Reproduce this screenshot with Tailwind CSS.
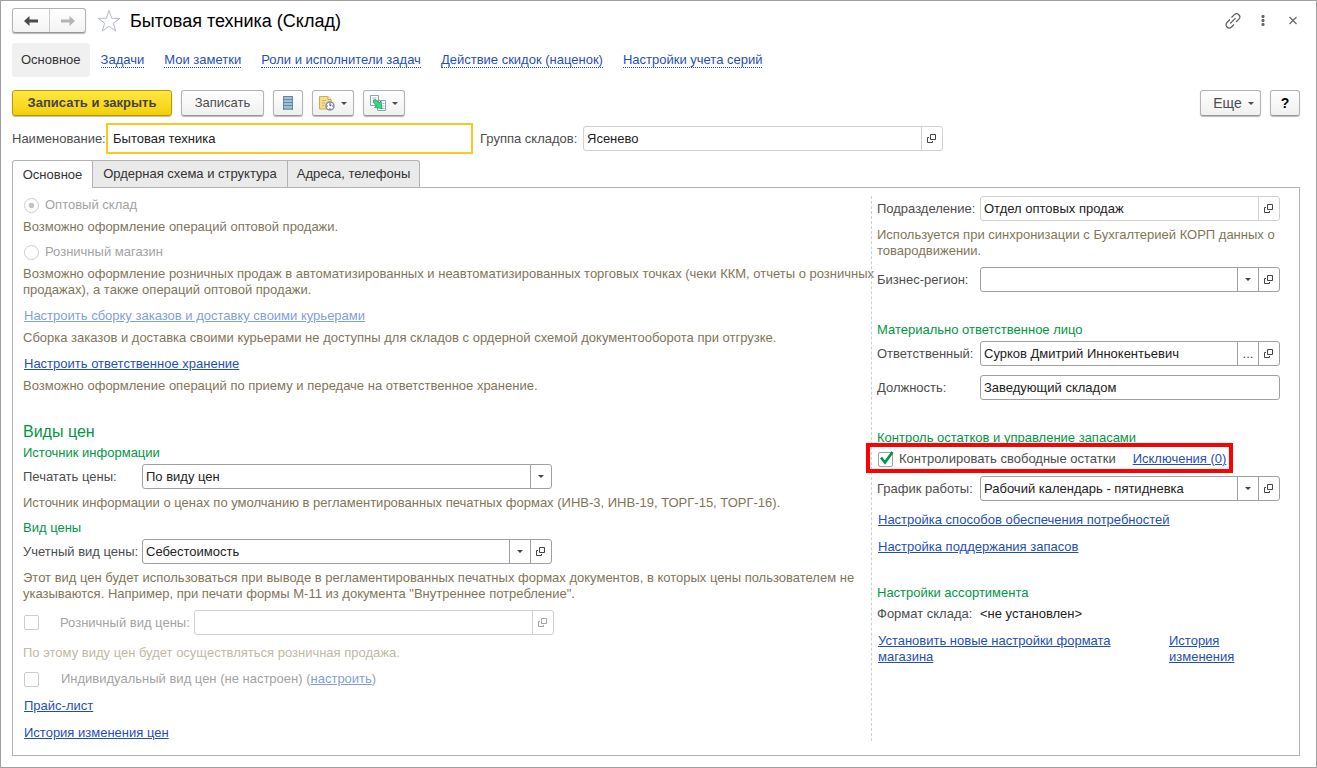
<!DOCTYPE html>
<html lang="ru">
<head>
<meta charset="utf-8">
<title>Бытовая техника (Склад)</title>
<script src="https://cdn.jsdelivr.net/npm/@tailwindcss/browser@4"></script>
</head>
<body class="bg-white font-['Liberation_Sans',Arial,sans-serif] text-[13px] leading-4 text-[#4d4d4d]">
<svg class="hidden" aria-hidden="true">
  <symbol id="open" viewBox="0 0 10 10"><path d="M3.500 .5h5v5h-5z M2 3.500H.5v5h5V7" fill="none" stroke="currentColor"/></symbol>
  <symbol id="down" viewBox="0 0 6 3"><path d="M0 0h6L3 3z" fill="currentColor"/></symbol>
</svg>
<div class="min-h-screen border border-[#a0a0a0] px-[11px] pt-[6px] pb-[11px]">
  <header class="flex h-[27px] items-center">
    <div class="flex h-[25px] rounded-[3px] border border-[#b3b3b3] border-b-[#969696] bg-linear-to-b from-white to-[#f3f3f3] shadow-[0_1px_1px_#bbb]">
      <button class="flex w-9 items-center justify-center" aria-label="Назад"><svg class="h-3 w-4" viewBox="0 0 16 12"><path d="M1 6 6.500 1v3.500H15v3H6.500V11z" fill="#4a4a4a"/></svg></button>
      <button class="flex w-9 items-center justify-center border-l border-[#ccc]" aria-label="Вперед"><svg class="h-3 w-4" viewBox="0 0 16 12"><path d="M15 6 9.500 1v3.500H1v3h8.500V11z" fill="#b3b3b3"/></svg></button>
    </div>
    <button class="ml-[11px]" aria-label="В избранное"><svg class="size-6" viewBox="0 0 24 24"><path d="m12 1.500 2.700 7.800h8.200l-6.600 4.900 2.500 7.900-6.800-4.800-6.800 4.800 2.500-7.900-6.600-4.900h8.200z" fill="#fff" stroke="#b4bac2"/></svg></button>
    <h1 class="ml-[9px] text-lg text-black">Бытовая техника (Склад)</h1>
    <div class="mr-1 ml-auto flex items-center gap-[14px]">
      <button aria-label="Ссылка"><svg class="size-4" viewBox="0 0 16 16" fill="none" stroke="#5c5c5c" stroke-width="1.200"><path d="M6.500 4.500 9.300 1.700a3.100 3.100 0 0 1 4.500 4.500L11 9M9 11.500 6.500 14a3.100 3.100 0 0 1-4.500-4.500L5 6.500M5.200 10.500l5.300-5.300"/></svg></button>
      <button aria-label="Меню"><svg class="size-4" viewBox="0 0 16 16" fill="#666"><rect x="6.500" y="2" width="3" height="3" rx="1"/><rect x="6.500" y="6" width="3" height="3" rx="1"/><rect x="6.500" y="10" width="3" height="3" rx="1"/></svg></button>
      <button aria-label="Закрыть"><svg class="size-4" viewBox="0 0 16 16"><path d="m4.500 4 7 7m0-7-7 7" stroke="#666" stroke-width="1.200"/></svg></button>
    </div>
  </header>

  <nav class="mt-[9px] flex items-center gap-5 text-[#1f4fb5]">
    <a href="#" class="-mr-[9px] rounded-[3px] bg-[#f0f0f0] px-[9px] py-[9px] text-[#333]">Основное</a>
    <a href="#" class="border-b border-dotted border-[#1f4fb5] leading-[14px]">Задачи</a>
    <a href="#" class="border-b border-dotted border-[#1f4fb5] leading-[14px]">Мои заметки</a>
    <a href="#" class="border-b border-dotted border-[#1f4fb5] leading-[14px]">Роли и исполнители задач</a>
    <a href="#" class="border-b border-dotted border-[#1f4fb5] leading-[14px]">Действие скидок (наценок)</a>
    <a href="#" class="border-b border-dotted border-[#1f4fb5] leading-[14px]">Настройки учета серий</a>
  </nav>

  <div class="mt-[13px] mr-[5px] flex h-[26px] gap-[9px]">
    <button class="w-40 rounded-[3px] border border-[#b39b00] bg-linear-to-b from-[#ffe83d] to-[#f3cf00] font-bold text-[#444] shadow-[0_1px_1px_#bbb]">Записать и закрыть</button>
    <button class="w-[83px] rounded-[3px] border border-[#b3b3b3] border-b-[#969696] bg-linear-to-b from-white to-[#f0f0f0] shadow-[0_1px_1px_#bbb]">Записать</button>
    <button class="flex w-[30px] items-center justify-center rounded-[3px] border border-[#b3b3b3] border-b-[#969696] bg-linear-to-b from-white to-[#f0f0f0] shadow-[0_1px_1px_#bbb]" aria-label="Список"><svg class="h-[14px] w-[10px]" viewBox="0 0 10 14"><path d="M0 0h10v14H0z" fill="#a3c0d4"/><path d="M0 .5h10M0 3.500h10M0 6.500h10M0 9.500h10M0 13h10M.5 0v14M9.500 0v14" stroke="#6189a4"/></svg></button>
    <button class="flex w-[42px] items-center justify-center gap-[6px] rounded-[3px] border border-[#b3b3b3] border-b-[#969696] bg-linear-to-b from-white to-[#f0f0f0] shadow-[0_1px_1px_#bbb]" aria-label="Напоминание"><svg class="size-4" viewBox="0 0 16 16"><path d="M.5 1.500h8.500l3 3v9.500H.5z" fill="#f5dc8e" stroke="#d0ab50"/><path d="M9 1.500v3h3" fill="#fff3c8" stroke="#d0ab50"/><path d="M3 5.500h4M3 8h3M3 10.500h2" stroke="#d9b864"/><circle cx="11" cy="11" r="4" fill="#fff" stroke="#5f8fb8" stroke-width="1.400"/><path d="M11 8v1M11 13v1M8 11h1M13 11h1" stroke="#d33"/><path d="M11 11V9M11 11l1.500-1" stroke="#446"/></svg><svg class="h-[3px] w-[6px]"><use href="#down"/></svg></button>
    <button class="flex w-[42px] items-center justify-center gap-[6px] rounded-[3px] border border-[#b3b3b3] border-b-[#969696] bg-linear-to-b from-white to-[#f0f0f0] shadow-[0_1px_1px_#bbb]" aria-label="Создать на основании"><svg class="size-4" viewBox="0 0 16 16"><path d="M.5.5h8v10h-8zM7.500 5.500h8v10h-8z" fill="#fff" stroke="#8ba3b5"/><path d="M2.500 3h4M12.500 8.500h2M12.500 11h2M11 13.500h3.500" stroke="#9fb3c1"/><path d="M3.500 5 6 4.500 9 8l2-2 1 7.500-7.500-1L6.500 10.500 3.500 8z" fill="#35d983" stroke="#159a52" stroke-width=".7"/></svg><svg class="h-[3px] w-[6px]"><use href="#down"/></svg></button>
    <button class="ml-auto flex w-[61px] items-center justify-center gap-[6px] rounded-[3px] border border-[#b3b3b3] border-b-[#969696] bg-linear-to-b from-white to-[#f0f0f0] pl-[6px] text-sm shadow-[0_1px_1px_#bbb]">Еще<svg class="h-[3px] w-[6px]"><use href="#down"/></svg></button>
    <button class="w-[30px] rounded-[3px] border border-[#b3b3b3] border-b-[#969696] bg-linear-to-b from-white to-[#f0f0f0] text-sm font-bold text-black shadow-[0_1px_1px_#bbb]">?</button>
  </div>

  <div class="mt-[7px] flex items-center">
    <label for="name" class="w-[94px] whitespace-nowrap">Наименование:</label>
    <input id="name" value="Бытовая техника" class="h-[31px] w-[367px] border-2 border-[#fcc81e] px-[5px] text-[#222] outline-none">
    <label for="group" class="ml-[7px] w-[103px] whitespace-nowrap">Группа складов:</label>
    <div class="flex h-[25px] w-[360px] rounded-[3px] border border-[#d0d0d0] text-[#222]"><input id="group" value="Ясенево" class="min-w-0 flex-1 px-[3px] outline-none"><button class="flex w-[21px] items-center justify-center border-l border-[#d0d0d0] text-[#444]" aria-label="Открыть"><svg class="size-[10px]"><use href="#open"/></svg></button></div>
  </div>

  <div class="mt-[6px] flex h-[27px] text-[#333]" role="tablist">
    <button role="tab" aria-selected="true" class="relative z-10 -mb-px w-[81px] rounded-tl-[3px] border border-b-0 border-[#b3b3b3] bg-white">Основное</button>
    <button role="tab" class="w-[195px] border-t border-r border-[#b3b3b3] bg-[#eaeaea]">Ордерная схема и структура</button>
    <button role="tab" class="w-[132px] rounded-tr-[3px] border-t border-r border-[#b3b3b3] bg-[#eaeaea]">Адреса, телефоны</button>
  </div>

  <main class="mr-[5px] flex border border-[#b3b3b3] px-[10px] pt-2 pb-[14px]">
    <section class="flex min-w-0 flex-1 flex-col items-start pt-px text-[#7f7659]">
      <label class="flex items-center gap-[6px] pl-px text-[#a3a3a3]"><input type="radio" name="kind" checked disabled class="size-[15px] appearance-none rounded-full border border-[#ccc] bg-radial from-[#c4c4c4] from-25% to-white to-35%">Оптовый склад</label>
      <p class="mt-[6px]">Возможно оформление операций оптовой продажи.</p>
      <label class="mt-[9px] flex items-center gap-[6px] pl-px text-[#a3a3a3]"><input type="radio" name="kind" disabled class="size-[15px] appearance-none rounded-full border border-[#ccc]">Розничный магазин</label>
      <p class="mt-[6px] whitespace-nowrap">Возможно оформление розничных продаж в автоматизированных и неавтоматизированных торговых точках (чеки ККМ, отчеты о розничных<br>продажах), а также операций оптовой продажи.</p>
      <a href="#" class="mt-[10px] ml-px text-[#7f9fdb] underline">Настроить сборку заказов и доставку своими курьерами</a>
      <p class="mt-[6px]">Сборка заказов и доставка своими курьерами не доступны для складов с ордерной схемой документооборота при отгрузке.</p>
      <a href="#" class="mt-[10px] ml-px text-[#1f4fb5] underline">Настроить ответственное хранение</a>
      <p class="mt-[6px]">Возможно оформление операций по приему и передаче на ответственное хранение.</p>
      <h2 class="mt-[28px] text-base leading-5 text-[#009646]">Виды цен</h2>
      <h3 class="mt-[3px] text-[#009646]">Источник информации</h3>
      <div class="mt-[3px] flex items-center text-[#4d4d4d]">
        <label for="print" class="w-[119px] whitespace-nowrap">Печатать цены:</label>
        <div class="flex h-[25px] w-[410px] rounded-[3px] border border-[#a0a0a0] text-[#222]"><select id="print" class="min-w-0 flex-1 appearance-none px-[3px] outline-none"><option>По виду цен</option></select><span class="flex w-[21px] items-center justify-center border-l border-[#a0a0a0] text-[#444]"><svg class="h-[3px] w-[6px]"><use href="#down"/></svg></span></div>
      </div>
      <p class="mt-[6px]">Источник информации о ценах по умолчанию в регламентированных печатных формах (ИНВ-3, ИНВ-19, ТОРГ-15, ТОРГ-16).</p>
      <h3 class="mt-[9px] text-[#009646]">Вид цены</h3>
      <div class="mt-[3px] flex items-center text-[#4d4d4d]">
        <label for="acc" class="w-[119px] whitespace-nowrap">Учетный вид цены:</label>
        <div class="flex h-[25px] w-[410px] rounded-[3px] border border-[#a0a0a0] text-[#222]"><select id="acc" class="min-w-0 flex-1 appearance-none px-[3px] outline-none"><option>Себестоимость</option></select><span class="flex w-[21px] items-center justify-center border-l border-[#a0a0a0] text-[#444]"><svg class="h-[3px] w-[6px]"><use href="#down"/></svg></span><button class="flex w-[21px] items-center justify-center border-l border-[#a0a0a0] text-[#444]" aria-label="Открыть"><svg class="size-[10px]"><use href="#open"/></svg></button></div>
      </div>
      <p class="mt-[6px]">Этот вид цен будет использоваться при выводе в регламентированных печатных формах документов, в которых цены пользователем не<br>указываются. Например, при печати формы М-11 из документа "Внутреннее потребление".</p>
      <div class="mt-2 flex items-center text-[#a3a3a3]">
        <input type="checkbox" disabled aria-label="Розничный вид цены" class="ml-px size-[15px] appearance-none rounded-[2px] border border-[#ccc]">
        <label for="retail" class="ml-[21px] w-[134px] whitespace-nowrap">Розничный вид цены:</label>
        <div class="flex h-[25px] w-[360px] rounded-[3px] border border-[#d0d0d0]"><input id="retail" disabled class="min-w-0 flex-1 px-[3px]"><button disabled class="flex w-[21px] items-center justify-center border-l border-[#d0d0d0]" aria-label="Открыть"><svg class="size-[10px]"><use href="#open"/></svg></button></div>
      </div>
      <p class="mt-[10px] text-[#c0baa3]">По этому виду цен будет осуществляться розничная продажа.</p>
      <div class="mt-[10px] flex items-center text-[#a3a3a3]">
        <input id="indiv" type="checkbox" disabled class="ml-px size-[15px] appearance-none rounded-[2px] border border-[#ccc]">
        <span class="ml-[22px]"><label for="indiv">Индивидуальный вид цен (не настроен)</label> (<a href="#" class="text-[#7f9fdb] underline">настроить</a>)</span>
      </div>
      <a href="#" class="mt-[11px] ml-px text-[#1f4fb5] underline">Прайс-лист</a>
      <a href="#" class="mt-[11px] ml-px text-[#1f4fb5] underline">История изменения цен</a>
    </section>

    <section class="flex w-[418px] flex-none flex-col items-start border-l border-dashed border-[#d0d0d0] pr-[9px] pl-[5px]">
      <div class="flex w-full items-center">
        <label for="dep" class="w-[103px] whitespace-nowrap">Подразделение:</label>
        <div class="flex h-[25px] flex-1 rounded-[3px] border border-[#d0d0d0] text-[#222]"><input id="dep" value="Отдел оптовых продаж" class="min-w-0 flex-1 px-[3px] outline-none"><button class="flex w-[21px] items-center justify-center border-l border-[#d0d0d0] text-[#444]" aria-label="Открыть"><svg class="size-[10px]"><use href="#open"/></svg></button></div>
      </div>
      <p class="mt-[6px] whitespace-nowrap text-[#7f7659]">Используется при синхронизации с Бухгалтерией КОРП данных о<br>товародвижении.</p>
      <div class="mt-2 flex w-full items-center">
        <label for="reg" class="w-[103px] whitespace-nowrap">Бизнес-регион:</label>
        <div class="flex h-[25px] flex-1 rounded-[3px] border border-[#a0a0a0] text-[#222]"><select id="reg" class="min-w-0 flex-1 appearance-none px-[3px] outline-none"><option></option></select><span class="flex w-[21px] items-center justify-center border-l border-[#a0a0a0] text-[#444]"><svg class="h-[3px] w-[6px]"><use href="#down"/></svg></span><button class="flex w-[21px] items-center justify-center border-l border-[#a0a0a0] text-[#444]" aria-label="Открыть"><svg class="size-[10px]"><use href="#open"/></svg></button></div>
      </div>
      <h3 class="mt-[30px] text-[#009646]">Материально ответственное лицо</h3>
      <div class="mt-[3px] flex w-full items-center">
        <label for="resp" class="w-[103px] whitespace-nowrap">Ответственный:</label>
        <div class="flex h-[25px] flex-1 rounded-[3px] border border-[#a0a0a0] text-[#222]"><input id="resp" value="Сурков Дмитрий Иннокентьевич" class="min-w-0 flex-1 px-[3px] outline-none"><button class="w-[21px] border-l border-[#a0a0a0] text-[#444]" aria-label="Выбрать">...</button><button class="flex w-[21px] items-center justify-center border-l border-[#a0a0a0] text-[#444]" aria-label="Открыть"><svg class="size-[10px]"><use href="#open"/></svg></button></div>
      </div>
      <div class="mt-[9px] flex w-full items-center">
        <label for="post" class="w-[103px] whitespace-nowrap">Должность:</label>
        <input id="post" value="Заведующий складом" class="h-[25px] min-w-0 flex-1 rounded-[3px] border border-[#a0a0a0] px-[3px] text-[#222] outline-none">
      </div>
      <h3 class="mt-[30px] text-[#009646]">Контроль остатков и управление запасами</h3>
      <div class="relative mt-[5px] flex items-center">
        <span class="pointer-events-none absolute -top-2 -right-[7px] -bottom-[6px] -left-[11px] border-4 border-[#f00]"></span>
        <label class="flex items-center gap-[6px] whitespace-nowrap"><span class="relative ml-px flex"><input type="checkbox" checked class="peer size-[15px] appearance-none rounded-[2px] border border-[#a0a0a0]"><svg class="pointer-events-none absolute -top-[2px] left-0 hidden h-4 w-4 peer-checked:block" viewBox="0 0 16 16"><path d="m3 7.500 4 5L14.500 2" fill="none" stroke="#009646" stroke-width="2.600"/></svg></span>Контролировать свободные остатки</label>
        <a href="#" class="ml-[17px] whitespace-nowrap text-[#1f4fb5] underline">Исключения (0)</a>
      </div>
      <div class="mt-[9px] flex w-full items-center">
        <label for="cal" class="w-[103px] whitespace-nowrap">График работы:</label>
        <div class="flex h-[25px] flex-1 rounded-[3px] border border-[#a0a0a0] text-[#222]"><select id="cal" class="min-w-0 flex-1 appearance-none px-[3px] outline-none"><option>Рабочий календарь - пятидневка</option></select><span class="flex w-[21px] items-center justify-center border-l border-[#a0a0a0] text-[#444]"><svg class="h-[3px] w-[6px]"><use href="#down"/></svg></span><button class="flex w-[21px] items-center justify-center border-l border-[#a0a0a0] text-[#444]" aria-label="Открыть"><svg class="size-[10px]"><use href="#open"/></svg></button></div>
      </div>
      <a href="#" class="mt-[11px] ml-px text-[#1f4fb5] underline">Настройка способов обеспечения потребностей</a>
      <a href="#" class="mt-[11px] ml-px text-[#1f4fb5] underline">Настройка поддержания запасов</a>
      <h3 class="mt-[30px] text-[#009646]">Настройки ассортимента</h3>
      <div class="mt-[5px] flex"><span class="w-[103px]">Формат склада:</span><span class="text-[#222]">&lt;не установлен&gt;</span></div>
      <div class="mt-[11px] ml-px flex text-[#1f4fb5]"><a href="#" class="w-[291px] underline">Установить новые настройки формата<br>магазина</a><a href="#" class="underline">История<br>изменения</a></div>
    </section>
  </main>
</div>
</body>
</html>
